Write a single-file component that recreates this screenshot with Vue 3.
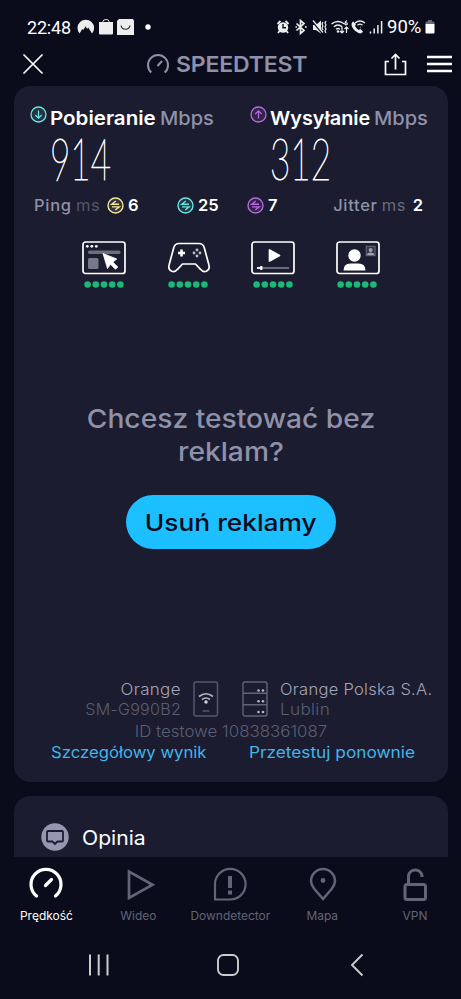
<script setup>
const speeds = [
  { id: 'down', label: 'Pobieranie', value: '914', arrow: 'M8.500 4.500V12M5.300 9l3.200 3.200L11.700 9' },
  { id: 'up', label: 'Wysyłanie', value: '312', arrow: 'M8.500 12.500V5M5.300 8l3.200-3.200L11.700 8' },
]
const pings = [
  { id: 'idle', value: 6 },
  { id: 'down', value: 25 },
  { id: 'up', value: 7 },
]
const uses = ['web', 'game', 'video', 'call']
const tabs = [
  { id: 'speed', label: 'Prędkość' },
  { id: 'video', label: 'Wideo' },
  { id: 'detector', label: 'Downdetector' },
  { id: 'map', label: 'Mapa' },
  { id: 'vpn', label: 'VPN' },
]
</script>

<template>
  <div class="screen">
    <div class="status">
      <span class="clock">22:48</span>
      <svg class="status-left" width="76" height="20" viewBox="0 0 76 20">
        <path d="M2.600 16.500A8.300 8.300 0 1 1 15 16.500L11.300 10.500 10 12 8.600 9.300 6.300 13 5.200 12Z" fill="#eee" />
        <path d="M22 5h14v11.500q0 1-1 1H23q-1 0-1-1Z" fill="#eee" />
        <path d="M26 6V4.500q0-2 3-2t3 2V6" fill="none" stroke="#ddd" stroke-width="1" />
        <path d="M42 2h14l1 2v14H40V4Z" fill="#eee" />
        <path d="M44 8.500c1 5 8 5 9 0" fill="none" stroke="#252633" stroke-width="1.200" />
        <circle cx="71" cy="10" r="2.700" fill="#fff" />
      </svg>
      <span class="grow"></span>
      <svg class="status-right" width="108" height="18" viewBox="0 0 108 18" fill="none" stroke="#eee" stroke-width="1.400">
        <circle cx="7" cy="9.500" r="5.200" fill="#eee" stroke="none" />
        <path d="M1.500 6 4.500 3M12.500 6 9.500 3M3.500 13 2 15M10.500 13l1.500 2" stroke-width="1.800" />
        <path d="M7 6v3.800h3" stroke="#0a0c1b" />
        <path d="m20.500 5.500 7.500 7-3.500 3V2.500L28 5.500l-7.500 7M19.500 9h1.500M29 9h1.800" stroke-width="1.700" />
        <path d="M37 7h3l5-4.500v13L40 12h-3Z" fill="#eee" stroke="none" />
        <path d="m36 3 10 12" stroke="#0a0c1b" stroke-width="1.600" /><path d="m37 2.500 10 12" stroke-width="1.200" />
        <path d="m47 4-1 2 1 2-1 2 1 2M50 3l-1 2 1 2-1 2 1 2-1 2 1 2" stroke-width="1.200" />
        <path d="M55.500 6q6.500-5 13 0M57.800 8.800q4.200-3.500 8.400 0M60 11.300q2-1.500 4 0" />
        <circle cx="62" cy="13.500" r="1.300" fill="#eee" stroke="none" />
        <path d="M66 9v6m-2-2 2 2 2-2M70.500 15V9m-2 2 2-2 2 2M71 2.500q-2 1-2 3t2 1q1-2-1.500-2" stroke-width="1.200" />
        <path d="M77 3.500c-3 2-1 7 3 10s6 2 7 0l-2.500-2.500-2 1q-2-1.500-3.500-4L80 6Z" fill="#eee" stroke="none" />
        <path d="M79 5q5-4 10 0M81.500 7.200q2.500-2 5 0M84 9.500h.5" stroke-width="1.300" />
        <path d="M94.500 15.500v-2M98.200 15.500v-5M101.900 15.500V7M105.600 15.500V3" stroke-width="1.500" />
      </svg>
      <span class="battery-text">90%</span>
      <svg class="battery" width="10" height="16" viewBox="0 0 10 16">
        <path d="M3 1h4v1.500h1.500l1 1V5H.5V3.500l1-1H3Z" fill="#696a75" />
        <path d="M.5 5h9v8.500q0 1-1 1h-7q-1 0-1-1Z" fill="#fff" />
      </svg>
    </div>

    <header class="header">
      <svg class="close" width="22" height="22" viewBox="0 0 22 22"><path d="m1.500 1.500 19 19m0-19-19 19" fill="none" stroke="#fff" stroke-width="1.700" /></svg>
      <div class="brand">
        <svg width="24" height="22" viewBox="0 0 24 22" fill="none" stroke="#8f91a8" stroke-width="2">
          <path d="M5.300 19.500a10 10 0 1 1 13.400 0M11.500 13 16 8" />
        </svg>
        <span>SPEEDTEST</span>
      </div>
      <svg class="share" width="23" height="24" viewBox="0 0 23 24" fill="none" stroke="#fff" stroke-width="1.700">
        <path d="M5 9.500H1.500v13h20v-13H18M11.500 17.500V2.500m-4 4 4-4 4 4" />
      </svg>
      <svg width="25" height="18" viewBox="0 0 25 18"><path d="M0 2h25M0 9h25M0 16h25" stroke="#fff" stroke-width="2.500" /></svg>
    </header>

    <main class="content">
      <section class="card result">
        <div class="speeds">
          <div v-for="s in speeds" :key="s.id" class="speed" :class="s.id">
            <div class="speed-title">
              <svg width="17" height="17" viewBox="0 0 17 17" fill="none" stroke="currentColor" stroke-width="1.300">
                <circle class="disc" cx="8.500" cy="8.500" r="7.500" /><path :d="s.arrow" />
              </svg>
              <span class="name">{{ s.label }}</span><span class="unit">Mbps</span>
            </div>
            <div class="value">{{ s.value }}</div>
          </div>
        </div>

        <div class="latency">
          <span class="ping-label">Ping</span><span class="ms">ms</span>
          <span v-for="p in pings" :key="p.id" class="ping" :class="p.id">
            <svg width="17" height="17" viewBox="0 0 17 17" fill="none" stroke="currentColor" stroke-width="1.400">
              <circle class="disc" cx="8.500" cy="8.500" r="7.500" />
              <path d="M12 7.200H4.800L8.800 4M5 9.900h7.200L8.200 13" />
            </svg>
            <b>{{ p.value }}</b>
          </span>
          <span class="grow"></span>
          <span class="jitter">Jitter</span><span class="ms jms">ms</span><b class="jv">2</b>
        </div>

        <div class="uses">
          <div v-for="u in uses" :key="u" class="use">
            <svg width="44" height="34" viewBox="0 0 44 34" fill="none" stroke="#fff" stroke-width="1.700">
              <template v-if="u === 'web'">
                <rect x="1" y="1" width="42" height="31.500" rx="2.500" />
                <g fill="#fff" stroke="none"><circle cx="5.300" cy="5.300" r="1.400" /><circle cx="9.800" cy="5.300" r="1.400" /><circle cx="14.300" cy="5.300" r="1.400" /></g>
                <rect x="6" y="9.500" width="32.500" height="3.500" rx="1.500" fill="#6c6d7d" stroke="none" />
                <rect x="6" y="17" width="10.500" height="11" rx="1.500" fill="#77788a" stroke="none" />
                <path d="m21 12.500 4.500 15 3-4.200 5 5 2.300-2.300-5-5 4-3Z" fill="#fff" stroke="#fff" stroke-width=".8" stroke-linejoin="round" />
              </template>
              <template v-else-if="u === 'game'">
                <path d="M12 2.500h20q4 0 5.200 4l4.600 17q1.500 5-2.500 6.800-3.300 1.200-5.800-2L28.500 23h-13l-5 5.300q-2.500 3.200-5.800 2Q.7 28.500 2.200 23.500l4.600-17q1.200-4 5.200-4Z" stroke-linejoin="round" />
                <path d="M14.500 8.500v7M11 12h7" stroke-width="2.600" />
                <g fill="#bdbdca" stroke="none"><circle cx="30" cy="9" r="1.400" /><circle cx="30" cy="15" r="1.400" /><circle cx="27" cy="12" r="1.400" /><circle cx="33" cy="12" r="1.400" /></g>
              </template>
              <template v-else-if="u === 'video'">
                <rect x="1" y="1" width="42" height="31.500" rx="2.500" />
                <path d="M18.500 9v11l10-5.500Z" fill="#fff" stroke-linejoin="round" />
                <path d="M6 27h32" stroke="#77788a" /><path d="M6 27h4" /><path d="M10.300 25v4" stroke-width="2.200" />
              </template>
              <template v-else>
                <rect x="1" y="1" width="42" height="31.500" rx="2.500" />
                <g fill="#fff" stroke="none"><circle cx="18.500" cy="14.500" r="6.200" /><path d="M7.500 29.500q0-7 7-7h8q7 0 7 7Z" /></g>
                <rect x="30.300" y="5.300" width="8.700" height="9.300" fill="#343548" stroke="#626376" stroke-width="1.200" />
                <circle cx="34.600" cy="9" r="2" fill="#a1a1af" stroke="none" /><path d="M31 14q0-2.500 3.600-2.500t3.600 2.500Z" fill="#a1a1af" stroke="none" />
              </template>
            </svg>
            <svg class="dots" width="40" height="7" viewBox="0 0 40 7" fill="#1bb977"><circle v-for="n in 5" :key="n" :cx="8.200 * n - 4.600" cy="3.500" r="3.300" /></svg>
          </div>
        </div>

        <div class="promo">
          <p>Chcesz testować bez<br />reklam?</p>
          <button><span>Usuń reklamy</span></button>
        </div>

        <div class="hosts">
          <div class="host client"><span class="t1">Orange</span><span class="t2">SM-G990B2</span></div>
          <svg width="26" height="36" viewBox="0 0 26 36" fill="none" stroke="#55576b" stroke-width="1.500">
            <rect x="1" y="1" width="23.500" height="34" rx="2" /><path d="M9.500 30h7" />
            <path d="M6 15.500q7-5.500 14 0M9 18.500q4-3 8 0" stroke="#b3b4c2" stroke-width="1.700" /><circle cx="13" cy="21" r="1.700" fill="#d3d4de" stroke="none" />
          </svg>
          <svg class="rack" width="26" height="36" viewBox="0 0 26 36" fill="none" stroke="#606276" stroke-width="1.400">
            <rect x="1" y="1" width="24" height="34" rx="2" /><path d="M1 12.300h24M1 23.700h24" />
            <g fill="#b6b7c4" stroke="none"><circle cx="16.500" cy="9.500" r="1.300" /><circle cx="21" cy="9.500" r="1.300" /><circle cx="16.500" cy="20.200" r="1.300" /><circle cx="21" cy="20.200" r="1.300" /><circle cx="16.500" cy="31" r="1.300" /><circle cx="21" cy="31" r="1.300" /></g>
          </svg>
          <div class="host server"><span class="t1">Orange Polska S.A.</span><span class="t2">Lublin</span></div>
        </div>
        <div class="test-id">ID testowe 10838361087</div>
        <div class="links"><a class="detail">Szczegółowy wynik</a><a class="retest">Przetestuj ponownie</a></div>
      </section>

      <section class="card opinion">
        <svg width="28" height="28" viewBox="0 0 28 28">
          <circle cx="14" cy="14" r="13.700" fill="#9597b1" />
          <path d="M7 8h14q1 0 1 1v8.500q0 1-1 1h-4.500L14 21l-2.500-2.500H7q-1 0-1-1V9q0-1 1-1Z" fill="none" stroke="#1b1c2f" stroke-width="1.800" />
        </svg>
        <span>Opinia</span>
      </section>
    </main>

    <nav class="tabs">
      <div v-for="t in tabs" :key="t.id" class="tab" :class="{ active: t.id === 'speed' }">
        <svg width="36" height="36" viewBox="0 0 36 36" fill="none" stroke="currentColor" stroke-width="2.500">
          <path v-if="t.id === 'speed'" d="M8.500 29a15 15 0 1 1 19 0M17.500 18.500l6-6" stroke-width="3.200" stroke-linecap="round" />
          <path v-else-if="t.id === 'video'" d="M9 4.500v26.500L32.500 17.700Z" stroke-width="2.700" />
          <template v-else-if="t.id === 'detector'"><path d="M3 32.500V17.500A15.300 15.300 0 1 1 18 32.500Z" stroke-width="2.200" /><path d="M18 9v12M18 23.500v4" stroke-width="4" /></template>
          <template v-else-if="t.id === 'map'"><path d="M18 32 9 21.500Q6 17.500 6 14a12 12 0 0 1 24 0q0 3.500-3 7.500Z" /><circle cx="18" cy="13.500" r="2.400" fill="currentColor" stroke="none" /></template>
          <template v-else><rect x="8" y="17.500" width="20.500" height="15" rx="2" stroke-width="3" /><path d="M11.500 17.500v-8.500a6.800 6.800 0 0 1 13.500 0v1" stroke-width="3" /></template>
        </svg>
        <span>{{ t.label }}</span>
      </div>
    </nav>

    <div class="system">
      <svg width="22" height="22" viewBox="0 0 22 22"><path d="M2 .5v21M10.700 .5v21M19.500 .5v21" stroke="#ccc" stroke-width="2" /></svg>
      <svg width="24" height="24" viewBox="0 0 24 24"><rect x="2" y="2" width="20" height="20" rx="5.500" fill="none" stroke="#ccc" stroke-width="1.900" /></svg>
      <svg width="14" height="24" viewBox="0 0 14 24"><path d="M12.500 1.500 2 12l10.500 10.500" fill="none" stroke="#ccc" stroke-width="1.900" /></svg>
    </div>
  </div>
</template>

<style>
body { margin: 0; background: #0a0c1b; }
</style>

<style scoped>
.screen { width: 461px; height: 999px; display: flex; flex-direction: column; overflow: hidden; background: #0a0c1b; color: #fff; font-family: Inter, "Open Sans", sans-serif; }
.screen * { box-sizing: border-box; }
svg { display: block; flex: none; }
span, b, a { white-space: nowrap; }
.grow { flex: 1; }
.status { height: 42px; flex: none; display: flex; align-items: center; padding: 12px 26px 0 27px; font-family: Roboto, sans-serif; font-size: 18px; }
.clock { width: 50px; letter-spacing: -.2px; }
.status-right { margin-right: 3px; }
.battery-text { width: 38px; font-size: 18.500px; }
.header { height: 44px; flex: none; display: flex; align-items: center; padding: 0 9px 0 22px; }
.brand { display: flex; align-items: center; gap: 6px; margin-left: 102px; width: 238px; color: #8f91a8; font-size: 22px; font-weight: 600; letter-spacing: -.2px; }
.brand span { transform: scaleX(1.048); transform-origin: left; }
.share { margin-right: 20px; }
.content { height: 771px; flex: none; overflow: hidden; padding: 0 13px 0 14px; display: flex; flex-direction: column; gap: 14px; }
.card { background: #1b1c2f; border-radius: 16px; flex: none; }
.result { height: 696px; display: flex; flex-direction: column; }
.speeds { display: grid; grid-template-columns: 220px 1fr; padding: 18px 0 0 16px; height: 105px; }
.speed-title { display: flex; height: 28px; line-height: 29px; font-size: 19px; }
.speed-title svg { margin: 2px 3px 0 0; }
.down { color: #6ce5e0; }
.up { color: #ba68e0; }
.idle { color: #f5e79a; }
.disc { fill: currentColor; fill-opacity: .12; }
.name { color: #fff; font-weight: 600; transform-origin: left; }
.down .name { width: 109.500px; transform: scaleX(1.08); }
.up .name { width: 104px; transform: scaleX(1.045); }
.unit { color: #8f91a8; font-weight: 500; transform: scaleX(1.055); transform-origin: left; }
.value { margin: 2px 0 0 20px; height: 46px; line-height: 46px; color: #fff; font-family: Lato, sans-serif; font-weight: 100; font-size: 58.500px; -webkit-text-stroke: 1px #fff; transform: scaleX(.6); transform-origin: left; }
.latency { display: flex; align-items: center; height: 28px; padding: 0 24px 0 20px; font-size: 16.500px; }
.ping-label, .jitter { color: #8f91a8; font-weight: 500; letter-spacing: .7px; }
.ping-label { width: 42px; }
.ms { color: #55566a; width: 31px; letter-spacing: .5px; }
.jms { color: #686a7e; margin-left: 4px; }
.ping { display: flex; gap: 4px; width: 70px; }
.ping b, .jv { color: #fff; font-weight: 600; line-height: 17px; }
.jv { margin-right: 1px; }
.uses { display: flex; gap: 40.500px; padding: 22px 0 0 68px; }
.use { display: flex; flex-direction: column; align-items: center; gap: 6px; }
.use .dots { margin-left: -1px; }
.promo { display: flex; flex-direction: column; align-items: center; margin-top: 114px; }
.promo p { margin: 0; text-align: center; color: #8f91a8; font-size: 26px; line-height: 33px; font-weight: 500; transform: scaleX(1.085); }
.promo button { margin-top: 27px; width: 210px; height: 54px; padding: 0; border: 0; border-radius: 27px; background: #1cbfff; color: #090b1b; font-family: inherit; font-size: 23.500px; font-weight: 500; }
.promo button span { display: inline-block; transform: scaleX(1.12); }
.hosts { display: flex; height: 41px; margin-top: 129.500px; align-items: center; }
.host { display: flex; flex-direction: column; font-size: 16px; line-height: 20.500px; font-weight: 300; letter-spacing: .3px; }
.client { width: 167px; margin-right: 12px; align-items: flex-end; }
.client .t1 { transform: scaleX(1.06); transform-origin: right; }
.server .t1 { transform: scaleX(1.03); transform-origin: left; }
.server .t2 { transform: scaleX(1.07); transform-origin: left; }
.rack { margin-left: 23px; margin-right: 12px; }
.t1 { color: #a3a4b7; }
.t2, .test-id { color: #5c5e72; }
.test-id { text-align: center; font-size: 16px; line-height: 22px; font-weight: 300; transform: scaleX(1.055); }
.links { display: flex; font-size: 16px; line-height: 21px; color: #44b4e9; padding-left: 37px; }
.detail { width: 198px; transform: scaleX(1.043); transform-origin: left; }
.retest { transform: scaleX(1.078); transform-origin: left; }
.opinion { height: 90px; padding: 27px 0 0 27px; display: flex; align-items: flex-start; gap: 13px; font-size: 20px; line-height: 30px; }
.opinion span { transform: scaleX(1.055); transform-origin: left; }
.tabs { height: 73px; flex: none; display: grid; grid-template-columns: repeat(5, 92.200px); }
.tab { display: flex; flex-direction: column; align-items: center; padding-top: 10px; color: #626478; }
.tab span { margin-top: 5px; font-size: 11.500px; line-height: 17px; transform: scaleX(1.04); }
.tab.active { color: #fff; }
.system { height: 69px; display: flex; align-items: center; padding-left: 88px; }
.system svg:nth-child(2) { margin-left: 106px; }
.system svg:nth-child(3) { margin-left: 110px; }
</style>
